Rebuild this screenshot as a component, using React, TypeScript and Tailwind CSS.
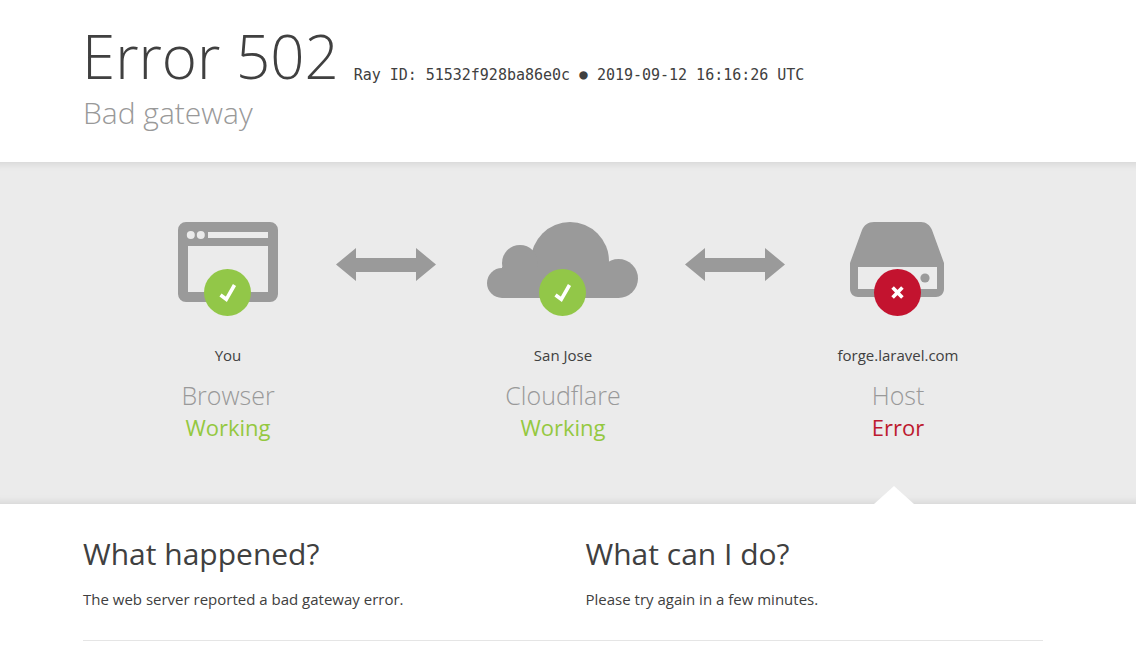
import React from "react";

function Badge({ ok }: { ok: boolean }) {
  return (
    <div
      className={`absolute top-[47px] left-1/2 -ml-[23.5px] flex h-[47px] w-[47px] items-center justify-center rounded-full ${
        ok ? "bg-[#92c748]" : "bg-[#c3132f]"
      }`}
    >
      <svg width="47" height="47" viewBox="0 0 47 47" fill="none" stroke="#fff" strokeWidth="3.6">
        {ok ? <path d="M16.5 26 L22.3 30.3 L30.5 16" /> : <path d="M18.6 18.6 L28.4 28.4 M28.4 18.6 L18.6 28.4" />}
      </svg>
    </div>
  );
}

function BrowserIcon() {
  return (
    <div className="relative h-[94px] w-[99px] shrink-0">
      <svg width="100" height="80" viewBox="0 0 100 80" className="block max-w-none">
        <path
          fillRule="evenodd"
          fill="#9a9a9a"
          d="M8 0H92A8 8 0 0 1 100 8V72A8 8 0 0 1 92 80H8A8 8 0 0 1 0 72V8A8 8 0 0 1 8 0ZM10 24V70H90V24ZM30 10V16H90V10Z"
        />
        <circle cx="12.8" cy="13" r="4" fill="#ebebeb" />
        <circle cx="22.8" cy="13" r="4" fill="#ebebeb" />
      </svg>
      <Badge ok />
    </div>
  );
}

function CloudIcon() {
  return (
    <div className="relative h-[94px] w-[151px] shrink-0">
      <svg width="151" height="76" viewBox="0 0 151 76" className="block" fill="#9a9a9a">
        <circle cx="83" cy="39" r="39" />
        <circle cx="33" cy="41" r="18" />
        <circle cx="15" cy="61" r="15" />
        <circle cx="131.5" cy="56.5" r="19.5" />
        <rect x="15" y="45" width="116" height="31" />
      </svg>
      <Badge ok />
    </div>
  );
}

function DriveIcon() {
  return (
    <div className="relative h-[94px] w-[94px] shrink-0">
      <svg width="94" height="75" viewBox="0 0 94 75" className="block">
        <path
          fillRule="evenodd"
          fill="#9a9a9a"
          d="M24 0H71C76 0 80 3 82 8L94 41V67C94 72 90 75 86 75H8C4 75 0 72 0 67V41L12 8C14 3 18 0 24 0ZM8 45V67H87V45Z"
        />
        <circle cx="75" cy="56" r="4.6" fill="#9a9a9a" />
      </svg>
      <Badge ok={false} />
    </div>
  );
}

function Arrow() {
  return (
    <svg width="100" height="33" viewBox="0 0 100 33" className="mt-[26px] block shrink-0" fill="#9a9a9a">
      <polygon points="0,16.5 20,0 20,10 80,10 80,0 100,16.5 80,33 80,24 20,24 20,33" />
    </svg>
  );
}

const nodes = [
  { place: "You", name: "Browser", status: "Working", ok: true },
  { place: "San Jose", name: "Cloudflare", status: "Working", ok: true },
  { place: "forge.laravel.com", name: "Host", status: "Error", ok: false },
];

export default function App() {
  return (
    <div className="h-[671px] w-[1136px] overflow-hidden bg-white font-['Open_Sans',sans-serif] text-[#404040]">
      {/* Header */}
      <header className="h-[162px] pl-[83px] pt-[24px]">
        <div className="flex items-baseline">
          <h1 className="-ml-[1px] text-[60px] leading-[65px] font-light">Error 502</h1>
          <span className="ml-[15px] translate-y-px font-['DejaVu_Sans_Mono',monospace] text-[15px] tracking-[-0.02px]">
            Ray ID: 51532f928ba86e0c{" "}
            <span className="relative -top-[1px] inline-block w-[9px] text-center text-[14px] leading-none">●</span>{" "}
            2019-09-12 16:16:26 UTC
          </span>
        </div>
        <h2 className="mt-[4px] text-[30px] leading-[40px] font-light text-[#999]">Bad gateway</h2>
      </header>

      {/* Status diagram */}
      <section className="relative h-[342px] bg-[#ebebeb] pt-[60px] shadow-[inset_0_10px_10px_-10px_rgba(0,0,0,0.14),inset_0_-10px_10px_-10px_rgba(0,0,0,0.14)]">
        <div className="flex pl-[178px]">
          <BrowserIcon />
          <div className="ml-[59px]">
            <Arrow />
          </div>
          <div className="ml-[51px]">
            <CloudIcon />
          </div>
          <div className="ml-[47px]">
            <Arrow />
          </div>
          <div className="ml-[65px]">
            <DriveIcon />
          </div>
        </div>
        <div className="mt-[29px] ml-[60.5px] grid w-[1005px] grid-cols-3 text-center">
          {nodes.map((n) => (
            <div key={n.name}>
              <div className="text-[15px] leading-[20px]">{n.place}</div>
              <div className="mt-[14px] text-[25px] leading-[32px] font-light text-[#999]">{n.name}</div>
              <div className={`text-[22px] leading-[32px] ${n.ok ? "text-[#94c83f]" : "text-[#bd1a2f]"}`}>
                {n.status}
              </div>
            </div>
          ))}
        </div>
        <div className="absolute bottom-0 left-[874px] h-0 w-0 border-x-[20px] border-b-[18px] border-x-transparent border-b-white" />
      </section>

      {/* Explanation */}
      <section className="ml-[83px] w-[960px] pt-[30px]">
        <div className="grid grid-cols-[502.5px_1fr] border-b border-[#e5e5e5] pb-[31px]">
          <div>
            <h2 className="text-[30px] leading-[40px]">What happened?</h2>
            <p className="mt-[15px] text-[15px] leading-[20px]">The web server reported a bad gateway error.</p>
          </div>
          <div>
            <h2 className="text-[30px] leading-[40px]">What can I do?</h2>
            <p className="mt-[15px] text-[15px] leading-[20px]">Please try again in a few minutes.</p>
          </div>
        </div>
      </section>
    </div>
  );
}
